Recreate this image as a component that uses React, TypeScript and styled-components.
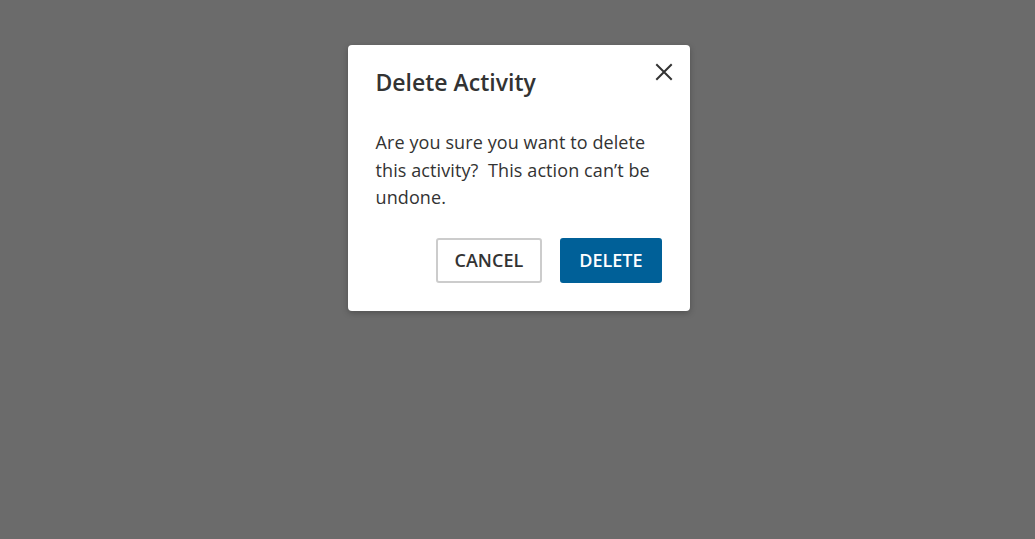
import React from "react";
import styled, { createGlobalStyle } from "styled-components";

const Global = createGlobalStyle`
  html, body { margin: 0; padding: 0; }
  body {
    background: #6b6b6b;
    font-family: "Open Sans", "Noto Sans", sans-serif;
    width: 1035px;
    height: 539px;
    overflow: hidden;
  }
`;

const Overlay = styled.div`
  width: 1035px;
  height: 539px;
  display: flex;
  justify-content: center;
  align-items: flex-start;
  padding: 45px 0 0 2px;
  box-sizing: border-box;
`;

const Dialog = styled.div`
  position: relative;
  width: 342px;
  box-sizing: border-box;
  background: #ffffff;
  border-radius: 4px;
  box-shadow: 0 2px 6px rgba(0, 0, 0, 0.25);
  padding: 22px 28px 28px 28px;
  display: flex;
  flex-direction: column;
`;

const Title = styled.h2`
  margin: 0;
  font-size: 23px;
  line-height: 30px;
  font-weight: 600;
  color: #333333;
`;

const Close = styled.button`
  position: absolute;
  top: 16px;
  right: 15px;
  width: 22px;
  height: 22px;
  padding: 0;
  border: none;
  background: transparent;
  display: flex;
  align-items: center;
  justify-content: center;
  cursor: pointer;
`;

const Body = styled.p`
  margin: 32px 0 0 0;
  font-size: 18px;
  line-height: 27.5px;
  letter-spacing: 0.1px;
  color: #333333;
`;

const Actions = styled.div`
  display: flex;
  justify-content: flex-end;
  gap: 18px;
  margin-top: 26px;
`;

const Button = styled.button<{ $primary?: boolean }>`
  height: 45px;
  box-sizing: border-box;
  padding: 0 17px;
  font-family: "Open Sans", "Noto Sans", sans-serif;
  font-size: 18px;
  font-weight: 600;
  text-transform: uppercase;
  border-radius: 3px;
  cursor: pointer;
  border: 2px solid ${(p) => (p.$primary ? "#006098" : "#cccccc")};
  background: ${(p) => (p.$primary ? "#006098" : "#ffffff")};
  color: ${(p) => (p.$primary ? "#ffffff" : "#333333")};
`;

export default function App() {
  return (
    <>
      <Global />
      <Overlay>
        <Dialog>
          <Title>Delete Activity</Title>
          <Close aria-label="Close">
            <svg width="18" height="18" viewBox="0 0 18 18">
              <path d="M2 2 L16 16 M16 2 L2 16" stroke="#333" strokeWidth="2" strokeLinecap="square" />
            </svg>
          </Close>
          <Body>
            Are you sure you want to delete this activity?&nbsp; This action can’t be undone.
          </Body>
          <Actions>
            <Button>Cancel</Button>
            <Button $primary>Delete</Button>
          </Actions>
        </Dialog>
      </Overlay>
    </>
  );
}
